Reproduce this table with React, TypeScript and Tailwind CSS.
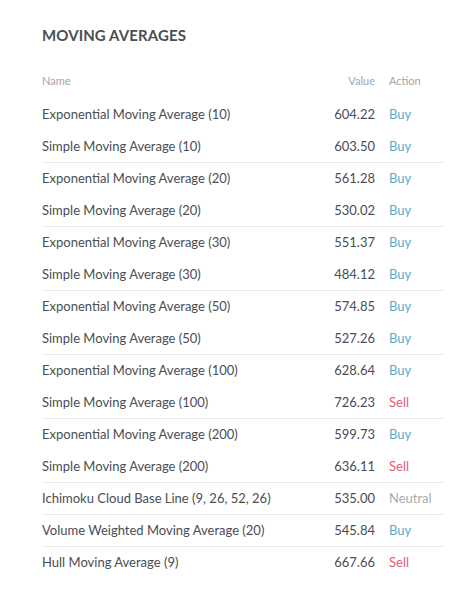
const ROWS: { name: string; value: string; action: 'Buy' | 'Sell' | 'Neutral'; border: boolean }[] = [
  { name: 'Exponential Moving Average (10)', value: '604.22', action: 'Buy', border: false },
  { name: 'Simple Moving Average (10)', value: '603.50', action: 'Buy', border: true },
  { name: 'Exponential Moving Average (20)', value: '561.28', action: 'Buy', border: false },
  { name: 'Simple Moving Average (20)', value: '530.02', action: 'Buy', border: true },
  { name: 'Exponential Moving Average (30)', value: '551.37', action: 'Buy', border: false },
  { name: 'Simple Moving Average (30)', value: '484.12', action: 'Buy', border: true },
  { name: 'Exponential Moving Average (50)', value: '574.85', action: 'Buy', border: false },
  { name: 'Simple Moving Average (50)', value: '527.26', action: 'Buy', border: true },
  { name: 'Exponential Moving Average (100)', value: '628.64', action: 'Buy', border: false },
  { name: 'Simple Moving Average (100)', value: '726.23', action: 'Sell', border: true },
  { name: 'Exponential Moving Average (200)', value: '599.73', action: 'Buy', border: false },
  { name: 'Simple Moving Average (200)', value: '636.11', action: 'Sell', border: true },
  { name: 'Ichimoku Cloud Base Line (9, 26, 52, 26)', value: '535.00', action: 'Neutral', border: true },
  { name: 'Volume Weighted Moving Average (20)', value: '545.84', action: 'Buy', border: true },
  { name: 'Hull Moving Average (9)', value: '667.66', action: 'Sell', border: false },
]

const actionColor = {
  Buy: 'text-[#5aaed0]',
  Sell: 'text-[#e0597f]',
  Neutral: 'text-[#a8abb0]',
}

export default function App() {
  return (
    <div className="min-h-[602px] bg-white pl-[42px] pr-[13px] pt-[25px] font-['Lato',sans-serif] text-[#4a4d52]">
      <h2 className="text-[15px] font-bold tracking-[0.1px] leading-[20px] text-[#4b4e54]">MOVING AVERAGES</h2>

      <div className="mt-[18px]">
        {/* Header */}
        <div className="flex h-9 items-center text-[11px] text-[#a3a6ab]">
          <div className="flex-1">Name</div>
          <div className="text-right">Value</div>
          <div className="w-[69px] pl-[14px]">Action</div>
        </div>

        {ROWS.map(r => (
          <div
            key={r.name}
            className={`flex h-8 items-center text-[13px] ${r.border ? 'border-b border-[#ebecee]' : ''}`}
          >
            <div className="flex-1 truncate">{r.name}</div>
            <div className="text-right">{r.value}</div>
            <div className={`w-[69px] pl-[14px] ${actionColor[r.action]}`}>{r.action}</div>
          </div>
        ))}
      </div>
    </div>
  )
}
